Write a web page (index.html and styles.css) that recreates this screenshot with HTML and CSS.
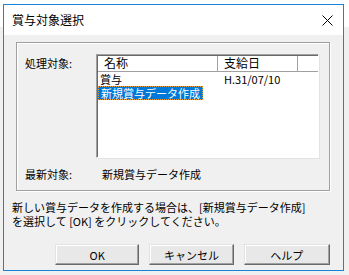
FILE: index.html
```html
<!DOCTYPE html>
<html lang="ja">
<head>
    <meta charset="UTF-8">
    <title>賞与対象選択</title>
    <link rel="stylesheet" href="styles.css">
</head>
<body>
    <div class="dialog">
        <div class="titlebar">
            <span class="title">賞与対象選択</span>
            <svg class="close" width="11" height="11" viewBox="0 0 11 11">
                <path d="M0.5 0.5L10.5 10.5M10.5 0.5L0.5 10.5" stroke="#000" stroke-width="1" fill="none"/>
            </svg>
        </div>
        <div class="content">
            <div class="group">
                <div class="field-row">
                    <span class="field-label">処理対象:</span>
                    <div class="listview">
                        <div class="lv-header">
                            <span class="col-name">名称</span>
                            <span class="col-date">支給日</span>
                            <span class="col-rest"></span>
                        </div>
                        <div class="lv-row">
                            <span class="cell-name">賞与</span>
                            <span class="cell-date">H.31/07/10</span>
                        </div>
                        <div class="lv-row">
                            <span class="cell-name"><span class="selected">新規賞与データ作成</span></span>
                            <span class="cell-date"></span>
                        </div>
                    </div>
                </div>
                <div class="latest-row">
                    <span class="field-label">最新対象:</span>
                    <span class="latest-value">新規賞与データ作成</span>
                </div>
            </div>
            <p class="message">新しい賞与データを作成する場合は、[新規賞与データ作成]<br>を選択して [OK] をクリックしてください。</p>
            <div class="buttons">
                <button type="button" class="btn">OK</button>
                <button type="button" class="btn">キャンセル</button>
                <button type="button" class="btn btn-wide">ヘルプ</button>
            </div>
        </div>
    </div>
</body>
</html>
```

FILE: styles.css
```css
body {
    margin: 0;
    padding: 4px 0 0 3px;
    font-family: "Noto Sans CJK JP", "Noto Sans", sans-serif;
    font-size: 11px;
    color: #000;
    background: linear-gradient(#fff 0, #fff 27px, #f0f0f0 27px);
    height: 275px;
    box-sizing: border-box;
    overflow: hidden;
}
.dialog {
    width: 341px;
    height: 267px;
    box-sizing: border-box;
    border: 1px solid #1883d7;
    background-color: #f0f0f0;
    display: flex;
    flex-direction: column;
}
.titlebar {
    height: 30px;
    background-color: #fff;
    display: flex;
    justify-content: space-between;
    align-items: center;
    padding: 0 10px 0 8px;
}
.title {
    font-size: 12px;
    line-height: 14px;
}
.close {
    display: block;
}
.content {
    padding: 7px 13px 0 12px;
}
.group {
    height: 149px;
    box-sizing: border-box;
    border: 1px solid #a0a0a0;
    box-shadow: inset 1px 1px 0 #fff, 1px 1px 0 #fff;
    padding: 11px 10px 0 8px;
}
.field-row {
    display: flex;
}
.field-label {
    width: 71px;
    line-height: 14px;
    flex-shrink: 0;
}
.field-row .field-label {
    padding-top: 2px;
}
.listview {
    width: 223px;
    height: 104px;
    box-sizing: border-box;
    background-color: #fff;
    border-top: 1px solid #a0a0a0;
    border-left: 1px solid #a0a0a0;
    border-right: 1px solid #fff;
    border-bottom: 1px solid #fff;
    box-shadow: inset 1px 1px 0 #696969, 1px 1px 0 #e3e3e3;
}
.lv-header {
    display: flex;
    height: 15px;
    line-height: 14px;
    font-size: 12px;
    border-bottom: 1px solid #a0a0a0;
    margin-left: 1px;
    margin-top: 1px;
}
.lv-header span {
    box-sizing: border-box;
}
.col-name {
    width: 120px;
    padding-left: 6px;
    border-right: 1px solid #a0a0a0;
}
.col-date {
    width: 80px;
    padding-left: 6px;
    border-right: 1px solid #a0a0a0;
}
.col-rest {
    flex: 1;
}
.lv-row {
    display: flex;
    height: 14px;
    line-height: 14px;
    margin-left: 1px;
}
.cell-name {
    display: flex;
    align-items: center;
    width: 120px;
    padding-left: 2px;
    box-sizing: border-box;
    white-space: nowrap;
}
.cell-date {
    padding-left: 6px;
}
.selected {
    margin-left: -2px;
    padding: 0 2px;
    line-height: 12px;
    background-color: #0078d7;
    color: #fff;
    border: 1px dotted #e8a040;
}
.latest-row {
    display: flex;
    margin-top: 9px;
    line-height: 14px;
}
.latest-value {
    padding-left: 6px;
}
.message {
    margin: 9px 0 0 -4px;
    line-height: 14px;
    white-space: nowrap;
}
.buttons {
    display: flex;
    gap: 10px;
    margin-top: 16px;
    padding-left: 39px;
}
.btn {
    width: 85px;
    height: 21px;
    box-sizing: border-box;
    font-family: "Noto Sans CJK JP", "Noto Sans", sans-serif;
    font-size: 11px;
    line-height: 14px;
    padding: 0;
    color: #000;
    background-color: #e8e8e8;
    border-top: 1px solid #e3e3e3;
    border-left: 1px solid #e3e3e3;
    border-right: 1px solid #696969;
    border-bottom: 1px solid #696969;
    box-shadow: inset -1px -1px 0 #a0a0a0, inset 1px 1px 0 #fff;
}
.btn-wide {
    width: 87px;
}
```
